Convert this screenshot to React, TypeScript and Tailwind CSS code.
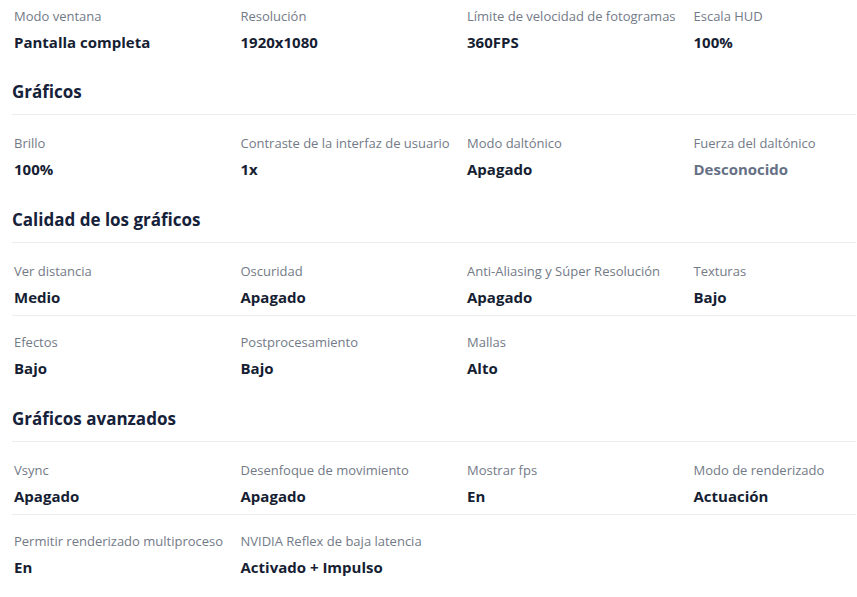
type Setting = { label: string; value: string; muted?: boolean };

const display: Setting[][] = [
  [
    { label: 'Modo ventana', value: 'Pantalla completa' },
    { label: 'Resolución', value: '1920x1080' },
    { label: 'Límite de velocidad de fotogramas', value: '360FPS' },
    { label: 'Escala HUD', value: '100%' },
  ],
];

const sections: { title: string; rows: Setting[][] }[] = [
  {
    title: 'Gráficos',
    rows: [
      [
        { label: 'Brillo', value: '100%' },
        { label: 'Contraste de la interfaz de usuario', value: '1x' },
        { label: 'Modo daltónico', value: 'Apagado' },
        { label: 'Fuerza del daltónico', value: 'Desconocido', muted: true },
      ],
    ],
  },
  {
    title: 'Calidad de los gráficos',
    rows: [
      [
        { label: 'Ver distancia', value: 'Medio' },
        { label: 'Oscuridad', value: 'Apagado' },
        { label: 'Anti-Aliasing y Súper Resolución', value: 'Apagado' },
        { label: 'Texturas', value: 'Bajo' },
      ],
      [
        { label: 'Efectos', value: 'Bajo' },
        { label: 'Postprocesamiento', value: 'Bajo' },
        { label: 'Mallas', value: 'Alto' },
      ],
    ],
  },
  {
    title: 'Gráficos avanzados',
    rows: [
      [
        { label: 'Vsync', value: 'Apagado' },
        { label: 'Desenfoque de movimiento', value: 'Apagado' },
        { label: 'Mostrar fps', value: 'En' },
        { label: 'Modo de renderizado', value: 'Actuación' },
      ],
      [
        { label: 'Permitir renderizado multiproceso', value: 'En' },
        { label: 'NVIDIA Reflex de baja latencia', value: 'Activado + Impulso' },
      ],
    ],
  },
];

function Rows({ rows, first }: { rows: Setting[][]; first?: boolean }) {
  return (
    <div className="divide-y divide-[#ececf0]">
      {rows.map((row, i) => (
        <div
          key={i}
          className={`grid grid-cols-[repeat(4,226.5px)] pl-[2px] pb-2 ${
            first ? 'pt-[7px]' : i === 0 ? 'pt-[19px]' : 'pt-[17px]'
          }`}
        >
          {row.map((s) => (
            <div key={s.label} className="flex flex-col gap-[7px]">
              <span className="text-[13px] leading-[18px] font-normal text-[#737a87] whitespace-nowrap">
                {s.label}
              </span>
              <span
                className={`text-[15px] leading-5 font-bold whitespace-nowrap ${
                  s.muted ? 'text-[#667085]' : 'text-[#161e33]'
                }`}
              >
                {s.value}
              </span>
            </div>
          ))}
        </div>
      ))}
    </div>
  );
}

export default function App() {
  return (
    <div
      className="w-[857px] h-[597px] overflow-hidden bg-white"
      style={{ fontFamily: '"Open Sans", "Noto Sans", sans-serif' }}
    >
      <div className="w-[844px] ml-3">
        <Rows rows={display} first />
        {sections.map((sec, i) => (
          <section key={sec.title} className={i === 0 ? 'mt-5' : 'mt-[21px]'}>
            <h2 className="text-[17px] leading-6 font-bold text-[#16213a] pb-[10px] border-b border-[#ececf0]">
              {sec.title}
            </h2>
            <Rows rows={sec.rows} />
          </section>
        ))}
      </div>
    </div>
  );
}
